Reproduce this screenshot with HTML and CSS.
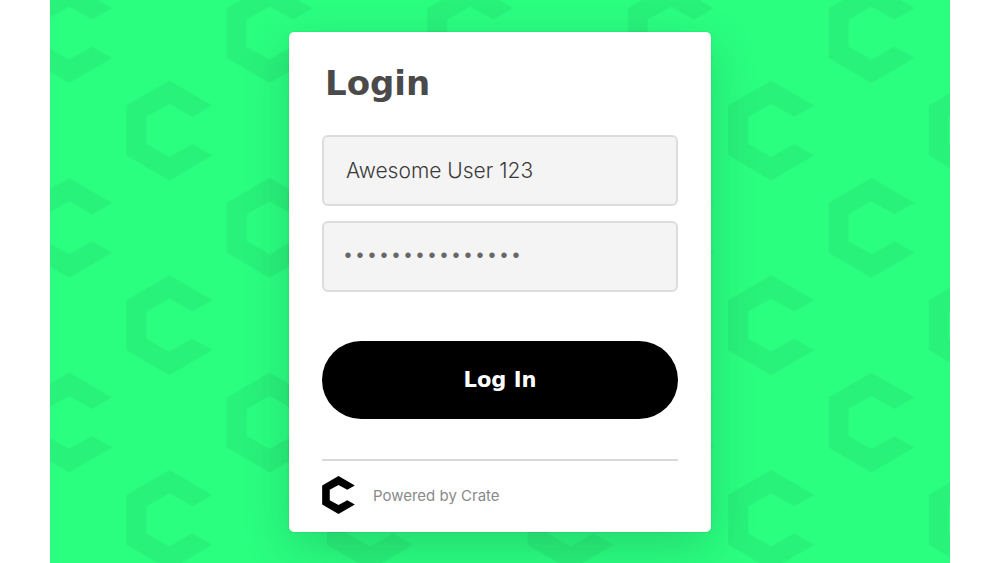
FILE: index.html
```html
<!DOCTYPE html>
<html lang="en">
<head>
<meta charset="utf-8">
<meta name="viewport" content="width=device-width, initial-scale=1">
<title>Login</title>
<link rel="stylesheet" href="styles.css">
</head>
<body>
<main class="stage">
  <svg class="backdrop" aria-hidden="true">
    <defs>
      <path id="crate-mark" d="M43 0 86 25 66 36.5 43 23.5 20 36.5V63.5L43 76.5 66 63.5 86 75 43 100 0 75V25Z"/>
      <pattern id="marks" x="76.4" y="80.5" width="200.6" height="194.7" patternUnits="userSpaceOnUse">
        <use href="#crate-mark"/>
        <use href="#crate-mark" x="100.3" y="97.3"/>
        <use href="#crate-mark" x="100.3" y="-97.4"/>
      </pattern>
    </defs>
    <rect class="backdrop-fill" width="100%" height="100%" fill="url(#marks)"/>
  </svg>
  <section class="card">
    <h1 class="title">Login</h1>
    <form class="form">
      <input class="field" type="text" aria-label="Username" value="Awesome User 123">
      <input class="field field-password" type="password" aria-label="Password" value="awesomepassword">
      <button class="submit" type="button">Log In</button>
    </form>
    <footer class="footer">
      <svg class="logo" viewBox="0 0 86 100" aria-hidden="true"><use href="#crate-mark"/></svg>
      <span>Powered by Crate</span>
    </footer>
  </section>
</main>
</body>
</html>
```
FILE: styles.css
```css
* {
  box-sizing: border-box;
}

body {
  margin: 0;
  background: #fff;
  font-family: Inter, "Liberation Sans", sans-serif;
}

.stage {
  position: relative;
  display: flex;
  justify-content: center;
  align-items: flex-start;
  min-height: 100vh;
  margin: 0 50px;
  padding: 32px 16px 16px;
  overflow: hidden;
  background: #2aff80;
}

.backdrop {
  position: absolute;
  inset: 0;
  width: 100%;
  height: 100%;
}

.backdrop-fill {
  opacity: 0.05;
}

.card {
  position: relative;
  width: 100%;
  max-width: 422px;
  padding: 31px 33px 18px;
  border-radius: 5px;
  background: #fff;
  box-shadow: 0 16px 48px rgba(20, 60, 40, 0.2), 0 0 2px rgba(20, 60, 40, 0.2);
}

.title {
  margin: 0 0 32px;
  padding-left: 3px;
  color: #4a4a4a;
  font: bold 34px/40px "DejaVu Sans", sans-serif;
}

.form {
  display: flex;
  flex-direction: column;
  gap: 15px;
}

.field {
  width: 100%;
  height: 71px;
  padding: 0 22px;
  border: 2px solid #dcdcdc;
  border-radius: 6px;
  background: #f4f4f4;
  color: #3a3a3a;
  font-family: inherit;
  font-size: 21px;
  font-weight: 300;
}

.field-password {
  padding: 0 18px;
  color: #666;
  font-family: "Liberation Mono", monospace;
  font-size: 20px;
}

.submit {
  height: 78px;
  margin-top: 34px;
  border: 0;
  border-radius: 39px;
  background: #000;
  color: #fff;
  font: bold 21px/24px "DejaVu Sans", sans-serif;
}

.footer {
  display: flex;
  align-items: center;
  gap: 18px;
  margin-top: 40px;
  padding-top: 15px;
  border-top: 2px solid #d8d8d8;
  color: #8a8a8a;
  font-size: 15px;
}

.logo {
  width: 33px;
  height: 38px;
}
```
